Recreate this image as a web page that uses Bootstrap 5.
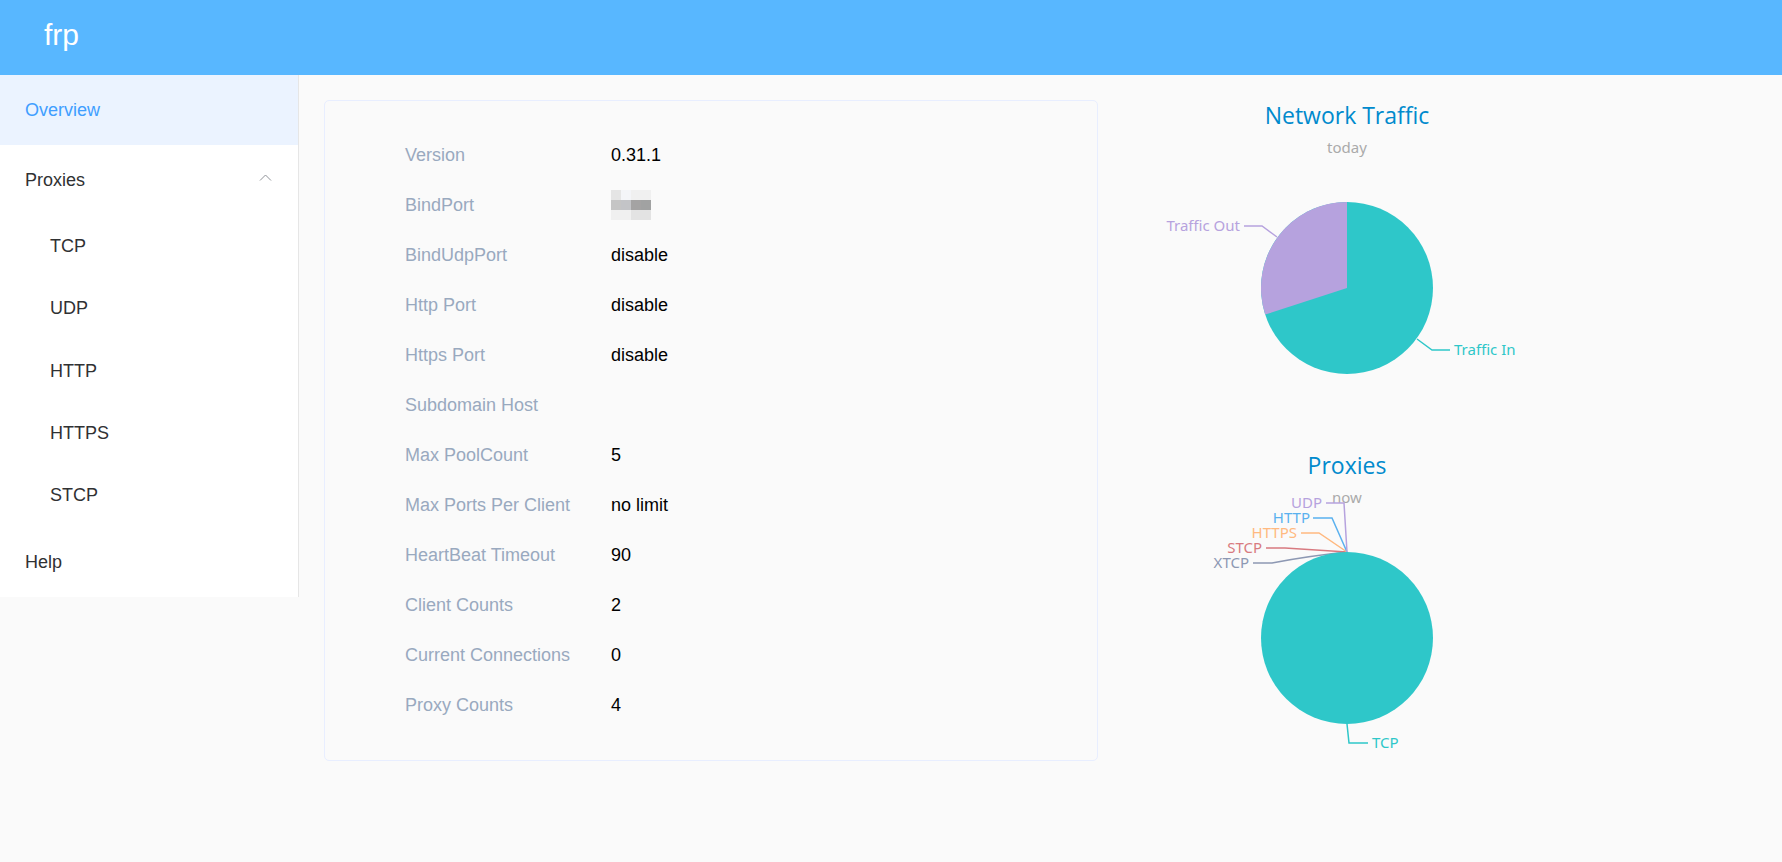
<!DOCTYPE html>
<html lang="en">
<head>
<meta charset="utf-8">
<meta name="viewport" content="width=device-width, initial-scale=1">
<title>frps dashboard</title>
<link rel="stylesheet" href="https://cdn.jsdelivr.net/npm/bootstrap@5.3.0/dist/css/bootstrap.min.css">
<style>
  body { font-family: "Liberation Sans", Arial, sans-serif; font-size: 18px; background: #fafafa; color: #000; }
  .top-bar { height: 75px; padding: 0 44px; background: #58b7ff; }
  .brand { font-size: 30px; line-height: 70px; color: #fff; }
  .side-menu { width: 299px; background: #fff; border-right: 1px solid #e6e6e6; }
  .menu-link { height: 70px; padding: 0 25px; color: #303133; text-decoration: none; background: none; border: 0; }
  .menu-link.active { background: #ebf3ff; color: #409eff; }
  .sub-menu { min-height: 312px; }
  .sub-menu .menu-link { height: auto; padding-left: 50px; }
  .page-main { padding: 15px 25px 25px; }
  .info-panel { flex: 0 0 54%; margin-top: 10px; padding: 29px 80px 30px; border: 1px solid #e8eeff; border-radius: 5px; }
  .info-row { min-height: 50px; line-height: 50px; }
  .info-row dt { width: 206px; font-weight: 400; color: #99a9bf; }
  .charts svg { font-family: "Noto Sans", "Open Sans", sans-serif; font-size: 15px; }
  .charts .chart-title { font-family: "Open Sans", "Noto Sans", sans-serif; font-size: 23px; fill: #008acd; }
  .chart-note { fill: #aaa; }
</style>
<script src="https://cdn.jsdelivr.net/npm/bootstrap@5.3.0/dist/js/bootstrap.bundle.min.js"></script>
</head>
<body>
<header class="top-bar"><a class="brand text-decoration-none d-inline-block" href="#">frp</a></header>
<div class="d-flex align-items-start">
  <nav class="side-menu flex-shrink-0" aria-label="Main">
    <a class="menu-link active d-flex align-items-center" href="#" aria-current="page">Overview</a>
    <button class="menu-link d-flex align-items-center justify-content-between w-100" type="button" data-bs-toggle="collapse" data-bs-target="#proxies" aria-expanded="true" aria-controls="proxies">
      Proxies
      <svg width="15" height="15" viewBox="0 0 15 15" fill="none" stroke="#909399" aria-hidden="true"><path d="M2 7.500l5.500-5.500L13 7.500"/></svg>
    </button>
    <div class="collapse show" id="proxies">
      <div class="sub-menu d-flex flex-column">
        <a class="menu-link d-flex align-items-center flex-fill" href="#tcp">TCP</a>
        <a class="menu-link d-flex align-items-center flex-fill" href="#udp">UDP</a>
        <a class="menu-link d-flex align-items-center flex-fill" href="#http">HTTP</a>
        <a class="menu-link d-flex align-items-center flex-fill" href="#https">HTTPS</a>
        <a class="menu-link d-flex align-items-center flex-fill" href="#stcp">STCP</a>
      </div>
    </div>
    <a class="menu-link d-flex align-items-center" href="#help">Help</a>
  </nav>
  <main class="page-main d-flex align-items-start flex-grow-1">
    <dl class="info-panel mb-0">
      <div class="info-row d-flex"><dt>Version</dt><dd class="mb-0">0.31.1</dd></div>
      <div class="info-row d-flex"><dt>BindPort</dt><dd class="mb-0 d-flex align-items-center">
        <svg width="40" height="30" shape-rendering="crispEdges" role="img" aria-label="Hidden">
          <path fill="#e5e5e5" d="M0 0h10v10H0z"/><path fill="#f4f5f8" d="M10 0h10v10H10z"/><path fill="#f0f0f0" d="M20 0h20v10H20z"/>
          <path fill="#c5c5c5" d="M0 10h10v10H0z"/><path fill="#c3c4c7" d="M10 10h10v10H10z"/><path fill="#a4a3a3" d="M20 10h10v10H20z"/><path fill="#a1a2a2" d="M30 10h10v10H30z"/>
          <path fill="#f0f0f0" d="M0 20h20v10H0z"/><path fill="#e3e3e3" d="M20 20h20v10H20z"/>
        </svg></dd></div>
      <div class="info-row d-flex"><dt>BindUdpPort</dt><dd class="mb-0">disable</dd></div>
      <div class="info-row d-flex"><dt>Http Port</dt><dd class="mb-0">disable</dd></div>
      <div class="info-row d-flex"><dt>Https Port</dt><dd class="mb-0">disable</dd></div>
      <div class="info-row d-flex"><dt>Subdomain Host</dt><dd class="mb-0"></dd></div>
      <div class="info-row d-flex"><dt>Max PoolCount</dt><dd class="mb-0">5</dd></div>
      <div class="info-row d-flex"><dt>Max Ports Per Client</dt><dd class="mb-0">no limit</dd></div>
      <div class="info-row d-flex"><dt>HeartBeat Timeout</dt><dd class="mb-0">90</dd></div>
      <div class="info-row d-flex"><dt>Client Counts</dt><dd class="mb-0">2</dd></div>
      <div class="info-row d-flex"><dt>Current Connections</dt><dd class="mb-0">0</dd></div>
      <div class="info-row d-flex"><dt>Proxy Counts</dt><dd class="mb-0">4</dd></div>
    </dl>
    <section class="charts d-flex flex-column">
      <svg width="500" height="350" viewBox="1 -10 500 350">
        <text class="chart-title" x="250" y="24" text-anchor="middle">Network Traffic</text>
        <text class="chart-note" x="250" y="53" text-anchor="middle">today</text>
        <g fill="none" stroke-width="1.500">
          <path stroke="#b6a2de" d="M147 126h18l15 11"/>
          <path stroke="#2ec7c9" d="M320 239l15 11h18"/>
        </g>
        <circle cx="250" cy="188" r="86" fill="#2ec7c9"/>
        <path fill="#b6a2de" d="M250 188V102A86 86 0 0 0 168.200 214.600z"/>
        <text x="143" y="131" text-anchor="end" fill="#b6a2de">Traffic Out</text>
        <text x="357" y="255" fill="#2ec7c9">Traffic In</text>
      </svg>
      <svg width="500" height="350" viewBox="1 -10 500 350">
        <text class="chart-title" x="250" y="24" text-anchor="middle">Proxies</text>
        <text class="chart-note" x="250" y="53" text-anchor="middle">now</text>
        <g fill="none" stroke-width="1.500">
          <path stroke="#8d98b3" d="M156 113h19q36-7 75-11"/>
          <path stroke="#d87a80" d="M169 98h19l62 4"/>
          <path stroke="#ffb980" d="M204 83h18l28 19"/>
          <path stroke="#5ab1ef" d="M216 68h19l15 34"/>
          <path stroke="#b6a2de" d="M229 53h18l3 49"/>
          <path stroke="#2ec7c9" d="M250 274l2 19h19"/>
        </g>
        <circle cx="250" cy="188" r="86" fill="#2ec7c9"/>
        <g text-anchor="end">
          <text x="225" y="58" fill="#b6a2de">UDP</text>
          <text x="213" y="73" fill="#5ab1ef">HTTP</text>
          <text x="200" y="88" fill="#ffb980">HTTPS</text>
          <text x="165" y="103" fill="#d87a80">STCP</text>
          <text x="152" y="118" fill="#8d98b3">XTCP</text>
        </g>
        <text x="275" y="298" fill="#2ec7c9">TCP</text>
      </svg>
    </section>
  </main>
</div>
</body>
</html>
